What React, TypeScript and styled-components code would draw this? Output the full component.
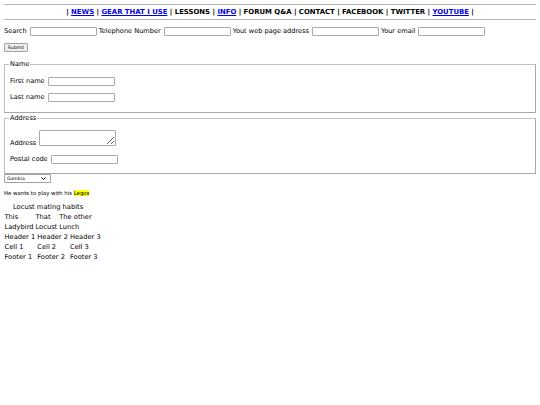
import React from "react";
import styled, { createGlobalStyle } from "styled-components";

const Global = createGlobalStyle`
  html, body { background: #fff; }
  body {
    margin: 0;
    padding: 4px;
    font-family: "DejaVu Sans", Verdana, sans-serif;
    font-size: 6.6px;
    color: #000;
  }
`;

const Rule = styled.hr`
  margin: 0;
  border: 0;
  border-top: 1px solid #b4b4b4;
  height: 0;
`;

const Nav = styled.nav`
  text-align: center;
  font-weight: bold;
  font-size: 6.9px;
  line-height: 14px;
  white-space: nowrap;
`;

const NavLink = styled.a`
  color: #00e;
  text-decoration: underline;
`;

const Form = styled.form`
  margin: 4px 0 0;
`;

const Row = styled.div`
  display: flex;
  align-items: center;
  height: 14px;
`;

const AddrRow = styled.div`
  display: flex;
  align-items: flex-end;
  margin-top: 8px;
`;

const Label = styled.label`
  white-space: nowrap;
  line-height: 8px;
  margin-right: 3px;
`;

const AddrLabel = styled(Label)`
  line-height: 5px;
`;

const TextInput = styled.input`
  box-sizing: border-box;
  width: 67px;
  height: 9px;
  border: 1px solid #a9a9a9;
  border-radius: 1px;
  padding: 0;
  margin: 0 2px 0 0;
  font-size: 6px;
  background: #fff;
`;

const TextArea = styled.textarea`
  box-sizing: border-box;
  width: 77px;
  height: 16px;
  border: 1px solid #a9a9a9;
  border-radius: 1px;
  padding: 0;
  margin: 0;
  font-size: 6px;
  resize: both;
`;

const Submit = styled.button`
  box-sizing: border-box;
  display: block;
  font-family: "DejaVu Sans", sans-serif;
  font-size: 4.6px;
  height: 9px;
  width: 24px;
  padding: 0;
  margin: 5px 0 0;
  color: #000;
  background: #efefef;
  border: 1px solid #a0a0a0;
  border-radius: 1px;
`;

const Fieldset = styled.fieldset<{ $top: number; $bottom: number }>`
  margin: ${(p) => p.$top}px 0 0;
  border: 1px solid #c0c0c0;
  border-right-color: #a8a8a8;
  border-bottom-color: #a8a8a8;
  padding: 0 5px ${(p) => p.$bottom}px;
  min-width: 0;
`;

const Legend = styled.legend`
  padding: 0 1px;
  margin-left: -1px;
  line-height: 8px;
`;

const Spacer = styled.div<{ $h: number }>`
  height: ${(p) => p.$h}px;
`;

const SelectWrap = styled.span`
  position: relative;
  display: block;
  width: 47px;
  height: 9px;
`;

const Select = styled.select`
  appearance: none;
  display: block;
  box-sizing: border-box;
  width: 47px;
  height: 9px;
  font-family: "DejaVu Sans", sans-serif;
  font-size: 4.6px;
  line-height: 7px;
  padding: 0 0 0 2px;
  color: #000;
  background: #fff;
  border: 1px solid #a0a0a0;
  border-radius: 1px;
  margin: 0;
`;

const Chevron = styled.svg`
  position: absolute;
  right: 5px;
  top: 3px;
  width: 5px;
  height: 3px;
  pointer-events: none;
`;

const Sentence = styled.p`
  font-size: 5.4px;
  line-height: 7px;
  margin: 7px 0 0;
`;

const Mark = styled.mark`
  background: #ff0;
  color: #000;
`;

const Table = styled.table`
  border-collapse: separate;
  border-spacing: 1px 0;
  margin-left: -1px;
  font-size: 6.7px;
  line-height: 10px;
  td, th {
    padding: 0 0.5px;
    font-weight: normal;
    text-align: left;
    white-space: nowrap;
  }
`;

const FirstTable = styled(Table)`
  margin-top: 5px;
`;

const Caption = styled.caption`
  text-align: center;
`;

export default function App() {
  return (
    <>
      <Global />
      <Rule />
      <Nav>
        | <NavLink href="#">NEWS</NavLink> | <NavLink href="#">GEAR THAT I USE</NavLink> | LESSONS |{" "}
        <NavLink href="#">INFO</NavLink> | FORUM Q&amp;A | CONTACT | FACEBOOK | TWITTER |{" "}
        <NavLink href="#">YOUTUBE</NavLink> |
      </Nav>
      <Rule />
      <Form>
        <Row>
          <Label>Search</Label>
          <TextInput />
          <Label>Telephone Number</Label>
          <TextInput />
          <Label>Yout web page address</Label>
          <TextInput />
          <Label>Your email</Label>
          <TextInput />
        </Row>
        <Submit type="button">Submit</Submit>
        <Fieldset $top={8} $bottom={8}>
          <Legend>Name</Legend>
          <Spacer $h={6} />
          <Row>
            <Label>First name</Label>
            <TextInput />
          </Row>
          <Spacer $h={2} />
          <Row>
            <Label>Last name</Label>
            <TextInput />
          </Row>
        </Fieldset>
        <Fieldset $top={1} $bottom={7}>
          <Legend>Address</Legend>
          <AddrRow>
            <AddrLabel>Address</AddrLabel>
            <TextArea />
          </AddrRow>
          <Spacer $h={6} />
          <Row>
            <Label>Postal code</Label>
            <TextInput />
          </Row>
        </Fieldset>
        <SelectWrap>
          <Select defaultValue="Gambia">
            <option>Gambia</option>
          </Select>
          <Chevron viewBox="0 0 5 3">
            <path d="M0.5 0.5 L2.5 2.5 L4.5 0.5" fill="none" stroke="#000" strokeWidth="1" />
          </Chevron>
        </SelectWrap>
      </Form>
      <Sentence>
        He wants to play with his <Mark>Legos</Mark>
      </Sentence>
      <FirstTable>
        <Caption>Locust mating habits</Caption>
        <thead>
          <tr>
            <th>This</th>
            <th>That</th>
            <th>The other</th>
          </tr>
        </thead>
        <tbody>
          <tr>
            <td>Ladybird</td>
            <td>Locust</td>
            <td>Lunch</td>
          </tr>
        </tbody>
      </FirstTable>
      <Table>
        <thead>
          <tr>
            <th>Header 1</th>
            <th>Header 2</th>
            <th>Header 3</th>
          </tr>
        </thead>
        <tbody>
          <tr>
            <td>Cell 1</td>
            <td>Cell 2</td>
            <td>Cell 3</td>
          </tr>
        </tbody>
        <tfoot>
          <tr>
            <td>Footer 1</td>
            <td>Footer 2</td>
            <td>Footer 3</td>
          </tr>
        </tfoot>
      </Table>
    </>
  );
}
